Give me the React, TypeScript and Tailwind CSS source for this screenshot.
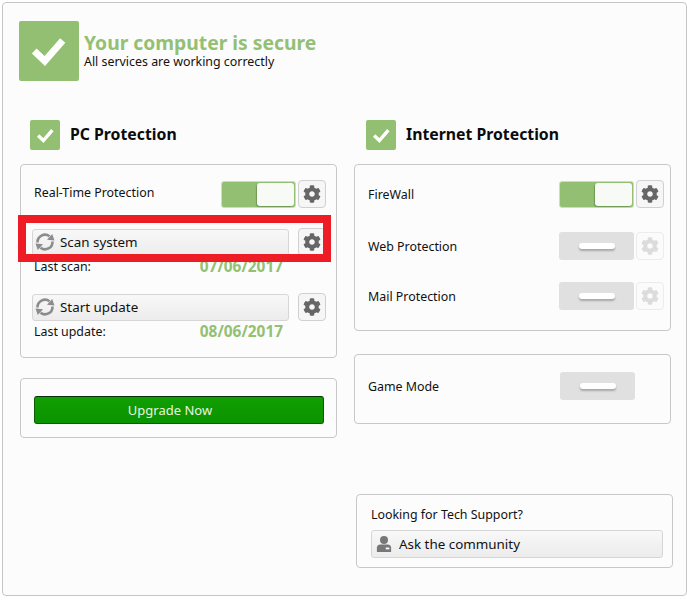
import { FaCog } from "react-icons/fa";

const FONT = "font-['Noto_Sans','DejaVu_Sans',sans-serif]";

function Check({ big }: { big?: boolean }) {
  return (
    <div className={big ? "w-[60px] h-[60px] rounded-[2px] bg-[#92bf72] flex items-center justify-center shrink-0" : "w-[30px] h-[30px] rounded-[2px] bg-[#92bf72] flex items-center justify-center shrink-0"}>
      <svg width={big ? 38 : 19} height={big ? 38 : 19} viewBox="0 0 36 36">
        <path d="M4 18 L14 27.5 L31 8" fill="none" stroke="#fff" strokeWidth="6.5" />
      </svg>
    </div>
  );
}

function Gear({ off }: { off?: boolean }) {
  return (
    <div className={off ? "w-[28px] h-[28px] rounded-[4px] border border-[#ececec] bg-[#fbfbfb] flex items-center justify-center shrink-0" : "w-[28px] h-[28px] rounded-[4px] border border-[#d0d0d0] bg-[#f6f6f6] flex items-center justify-center shrink-0"}>
      <FaCog size={18} color={off ? "#dcdcdc" : "#666666"} />
    </div>
  );
}

function ToggleOn() {
  return (
    <div className="w-[75px] h-[27px] rounded-[3px] bg-[#92bf72] border border-[#cfdcc4] flex justify-end p-[1px] shrink-0">
      <div className="w-[37px] h-full rounded-[3px] bg-[#f8fbf5] shadow-[-1px_1px_1px_#6f9a55]" />
    </div>
  );
}

function ToggleOff() {
  return (
    <div className="w-[75px] h-[28px] rounded-[3px] bg-[#e0e0e0] flex items-center justify-center shrink-0">
      <div className="w-[36px] h-[6px] rounded-full bg-white shadow-[0_2px_2px_#a8a8a8]" />
    </div>
  );
}

function Sync() {
  return (
    <svg width="20" height="20" viewBox="0 0 20 20" className="shrink-0">
      <path d="M2.5 10.5 A7.5 7.5 0 0 1 14.5 4.2" fill="none" stroke="#8c8c8c" strokeWidth="2.6" />
      <path d="M17.5 9.5 A7.5 7.5 0 0 1 5.5 15.8" fill="none" stroke="#8c8c8c" strokeWidth="2.6" />
      <path d="M12 7.8 L19.5 8.4 L17.2 2 Z" fill="#8c8c8c" />
      <path d="M8 12.2 L0.5 11.6 L2.8 18 Z" fill="#8c8c8c" />
    </svg>
  );
}

function ActionButton({ label }: { label: string }) {
  return (
    <div className="w-[257px] h-[27px] rounded-[3px] border border-[#d6d6d6] bg-gradient-to-b from-[#f8f8f8] to-[#ececec] flex items-center pl-[2px] text-[13.4px] text-[#111]">
      <Sync />
      <span className="ml-[5px]">{label}</span>
    </div>
  );
}

function Heading({ title, className }: { title: string; className: string }) {
  return (
    <div className={`flex items-center gap-[10px] ${className}`}>
      <Check />
      <span className="text-[15.8px] font-bold text-[#0b0b0b]">{title}</span>
    </div>
  );
}

const panel = "rounded-[4px] border border-[#c8c8c8]";
const label = "text-[12.4px] text-[#111] flex-1";

export default function App() {
  return (
    <div className={`w-[687px] h-[602px] bg-white pt-[2px] pl-[2px] ${FONT}`}>
      <div className="relative w-[685px] h-[594px] rounded-[4px] border border-[#c6c6c6] bg-[#fcfcfc]">
        <div className="flex ml-[16px] mt-[18px]">
          <Check big />
          <div className="ml-[5px] pt-[12px]">
            <div className="text-[19.3px] leading-[20px] font-bold text-[#93c072]">Your computer is secure</div>
            <div className="text-[12.4px] leading-[14px] mt-[2px] text-[#111]">All services are working correctly</div>
          </div>
        </div>

        <div className="flex gap-[17px] pl-[17px] mt-[39px]">
          <div className="w-[317px]">
            <Heading title="PC Protection" className="ml-[10px]" />
            <div className={`${panel} h-[194px] mt-[14px] pl-[11px] pt-[15px]`}>
              <div className="flex items-center h-[28px] w-[294px]">
                <span className={`ml-[2px] -mt-[2px] ${label}`}>Real-Time Protection</span>
                <ToggleOn />
                <div className="ml-[2px]"><Gear /></div>
              </div>
              <div className="flex items-center gap-[9px] mt-[20px]">
                <ActionButton label="Scan system" />
                <Gear />
              </div>
              <div className="flex items-center h-[22px] w-[249px] ml-[2px]">
                <span className={label}>Last scan:</span>
                <span className="text-[15.4px] font-bold text-[#93c072]">07/06/2017</span>
              </div>
              <div className="flex items-center gap-[9px] mt-[15px]">
                <ActionButton label="Start update" />
                <Gear />
              </div>
              <div className="flex items-center h-[22px] w-[249px] ml-[2px]">
                <span className={label}>Last update:</span>
                <span className="text-[15.4px] font-bold text-[#93c072]">08/06/2017</span>
              </div>
            </div>
            <div className={`${panel} h-[60px] mt-[20px] pl-[13px] pt-[17px]`}>
              <div className="w-[290px] h-[28px] rounded-[3px] border border-[#0b5c02] border-t-[#06300a] bg-gradient-to-b from-[#109f00] to-[#0c9300] flex items-center justify-center pr-[18px] pt-[2px] text-[13px] text-[#e8f5e0]">
                Upgrade Now
              </div>
            </div>
          </div>

          <div className="w-[317px]">
            <Heading title="Internet Protection" className="ml-[12px]" />
            <div className={`${panel} h-[167px] mt-[14px] pl-[13px] pt-[15px] pr-[6px] flex flex-col gap-[22px]`}>
              <div className="flex items-center h-[28px]">
                <span className={`mt-[3px] ${label}`}>FireWall</span>
                <ToggleOn />
                <div className="ml-[2px]"><Gear /></div>
              </div>
              <div className="flex items-center h-[28px] mt-[2px]">
                <span className={`mt-[3px] ${label}`}>Web Protection</span>
                <ToggleOff />
                <div className="ml-[2px]"><Gear off /></div>
              </div>
              <div className="flex items-center h-[28px]">
                <span className={`mt-[3px] ${label}`}>Mail Protection</span>
                <ToggleOff />
                <div className="ml-[2px]"><Gear off /></div>
              </div>
            </div>
            <div className={`${panel} h-[70px] mt-[23px] pl-[13px] pr-[35px] pt-[17px] flex items-start`}>
              <span className={`leading-[30px] ${label}`}>Game Mode</span>
              <ToggleOff />
            </div>
            <div className={`${panel} h-[74px] w-[317px] ml-[2px] mt-[70px] pl-[14px] pt-[12px]`}>
              <div className="text-[12.4px] leading-[16px] text-[#111]">Looking for Tech Support?</div>
              <div className="mt-[7px] w-[292px] h-[28px] rounded-[3px] border border-[#d6d6d6] bg-gradient-to-b from-[#f8f8f8] to-[#ececec] flex items-center pl-[4px] text-[13.4px] text-[#111]">
                <svg width="16" height="20" viewBox="0 0 18 20">
                  <circle cx="9" cy="5.5" r="4.5" fill="#777" />
                  <path d="M1 19 V14 Q1 11 5 10.5 H13 Q17 11 17 14 V19 Z" fill="#777" />
                  <rect x="11" y="14" width="4" height="2" fill="#fff" />
                </svg>
                <span className="ml-[7px]">Ask the community</span>
              </div>
            </div>
          </div>
        </div>

        <div className="absolute left-[15px] top-[212px] w-[313px] h-[47px] border-[8px] border-[#ee1c25]" />
      </div>
    </div>
  );
}
